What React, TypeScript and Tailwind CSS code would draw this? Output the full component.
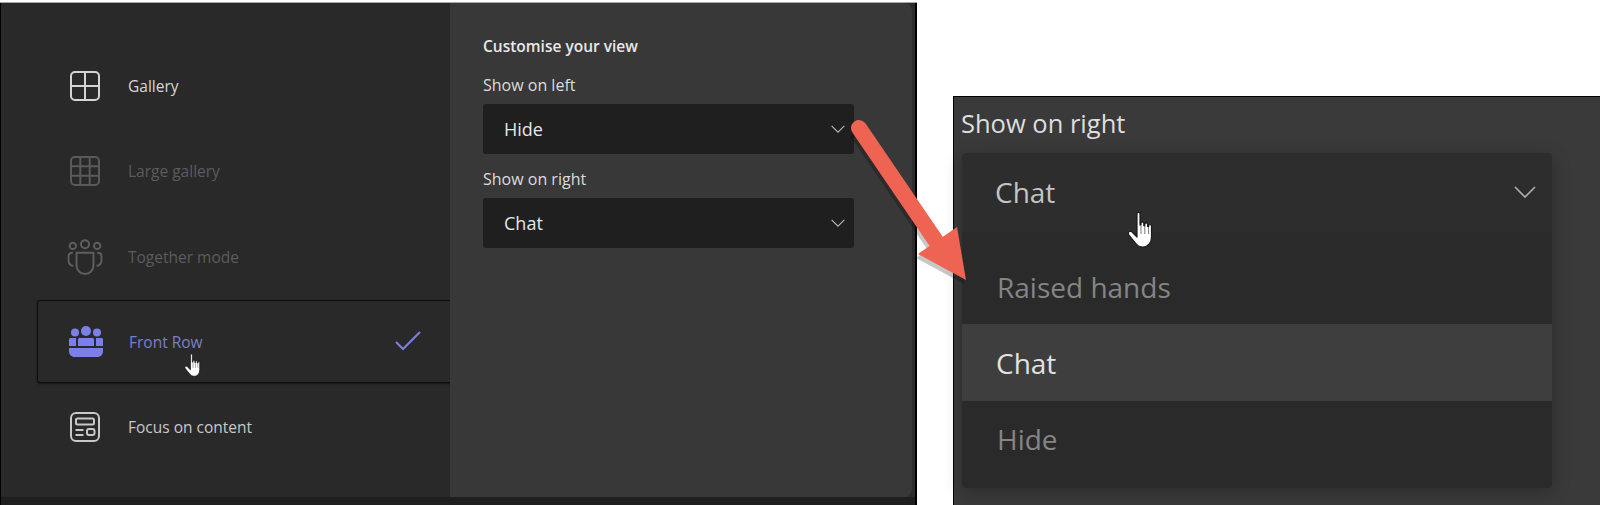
const font = "font-['Open_Sans','Noto_Sans',sans-serif]";

function Chevron({ className }: { className: string }) {
  return (
    <svg className={className} viewBox="0 0 22 12" fill="none" stroke="currentColor" strokeWidth="1.700">
      <path d="M1 1l10 10L21 1" />
    </svg>
  );
}

function GalleryIcon() {
  return (
    <svg className="shrink-0" width="30" height="30" viewBox="0 0 30 30" fill="none" stroke="#d4d4d4" strokeWidth="2">
      <rect x="1" y="1" width="28" height="28" rx="4" />
      <path d="M15 1v28M1 15h28" />
    </svg>
  );
}

function LargeGalleryIcon() {
  return (
    <svg className="shrink-0" width="30" height="30" viewBox="0 0 30 30" fill="none" stroke="#5a5a5a" strokeWidth="2">
      <rect x="1" y="1" width="28" height="28" rx="4" />
      <path d="M10.3 1v28M19.700 1v28M1 10.300h28M1 19.700h28" />
    </svg>
  );
}

function TogetherIcon() {
  return (
    <svg className="shrink-0" width="36" height="36" viewBox="0 0 34 34" fill="none" stroke="#5f5f5f" strokeWidth="1.800">
      <circle cx="17" cy="5" r="3.800" />
      <circle cx="5.500" cy="6.500" r="3" />
      <circle cx="28.500" cy="6.500" r="3" />
      <path d="M9 13h16v12c0 4.500-3.500 8-8 8s-8-3.500-8-8z" />
      <path d="M5.500 13c-2.500 0-4 1-4 3v4c0 3 1.500 5 4.500 5.500" />
      <path d="M28.500 13c2.500 0 4 1 4 3v4c0 3-1.500 5-4.500 5.500" />
    </svg>
  );
}

function FrontRowIcon() {
  return (
    <svg className="shrink-0" width="34" height="31" viewBox="0 0 34 31" fill="#7b80e8">
      <circle cx="17" cy="5" r="5" />
      <circle cx="6" cy="6.500" r="4" />
      <circle cx="28" cy="6.500" r="4" />
      <path d="M10.500 12h13c.8 0 1.500.7 1.500 1.500V20H9v-6.500c0-.8.7-1.500 1.500-1.500z" />
      <path d="M1.500 12H7v8H0v-6.500C0 12.700.7 12 1.500 12z" />
      <path d="M27 12h5.500c.8 0 1.500.7 1.500 1.500V20h-7z" />
      <path d="M0 22h34v3.500c0 3-2.500 5.500-5.500 5.500h-23C2.500 31 0 28.500 0 25.500z" />
    </svg>
  );
}

function FocusIcon() {
  return (
    <svg className="shrink-0" width="30" height="30" viewBox="0 0 30 30" fill="none" stroke="#c8c8c8" strokeWidth="2">
      <rect x="1" y="1" width="28" height="28" rx="5" />
      <rect x="6" y="6.500" width="18" height="6" rx="1.500" />
      <path d="M5.500 18h8M5.500 23h8" />
      <rect x="17" y="17" width="7.500" height="6" rx="2" />
    </svg>
  );
}

function Hand({ className }: { className: string }) {
  return (
    <svg className={className} viewBox="0 0 28 37" fill="#ffffff" stroke="#1a1a1a" strokeWidth="1.200" strokeLinejoin="round">
      <path d="M10 2.500c0-1.600 3-1.600 3 0V14l1 .2V12c0-1.400 2.800-1.400 2.800 0v2.600l1 .2v-1.800c0-1.400 2.800-1.400 2.800 0v2.400l1 .2v-1c0-1.400 2.900-1.400 2.900 0V26c0 5-3 10-8.500 10-4 0-6-1.500-8-4.500L2 24c-1-1.500-.8-3 .5-3.500 1.200-.5 2.500.2 3.500 1.500l4 4z" />
      <path d="M14 15v8M17.800 15v8M21.600 16v7" stroke="#555555" strokeWidth="0.800" fill="none" />
    </svg>
  );
}

function Row({ icon, label, tone }: { icon: React.ReactNode; label: string; tone: string }) {
  return (
    <div className="flex h-[85.5px] items-center pl-[33px]">
      <div className="flex w-[30px] justify-center">{icon}</div>
      <span className={`ml-[28px] pt-[1px] text-[15.500px] ${tone}`}>{label}</span>
    </div>
  );
}

function Select({ value }: { value: string }) {
  return (
    <div className="flex h-[50px] w-[371px] items-center justify-between rounded-[3px] bg-[#1f1f1f] pl-[21px] pr-[9px] text-[18px] text-[#e6e6e6]">
      <span>{value}</span>
      <Chevron className="h-[8px] w-[14px] text-[#b8b8b8]" />
    </div>
  );
}

export default function App() {
  return (
    <div className={`relative flex h-[505px] w-[1600px] overflow-hidden bg-white ${font}`}>
      {/* Left screenshot */}
      <div className="flex h-full w-[917px] flex-col pt-[2px]">
        <div className="h-px bg-[#a8a8a8]" />
        <div className="flex min-h-0 flex-1 border-x border-r-2 border-black bg-[#2c2c2c]">
          <div className="w-[449px] bg-[#292929] pl-[36px] pt-[40px]">
            <Row icon={<GalleryIcon />} label="Gallery" tone="text-[#d6d6d6]" />
            <Row icon={<LargeGalleryIcon />} label="Large gallery" tone="text-[#5c5c5c]" />
            <Row icon={<TogetherIcon />} label="Together mode" tone="text-[#5c5c5c]" />
            <div className="-mr-px mb-[2px] flex h-[83px] items-center rounded-l-[3px] border border-r-0 border-[#0d0d0d] pl-[33px] pr-[30px] shadow-[0_1px_2px_rgba(0,0,0,0.5)]">
              <div className="flex w-[30px] justify-center">
                <FrontRowIcon />
              </div>
              <span className="ml-[28px] flex-1 pt-[3px] text-[15.500px] text-[#7a7fcb]">Front Row</span>
              <svg width="26" height="20" viewBox="0 0 26 20" fill="none" stroke="#7b7fdc" strokeWidth="2.200">
                <path d="M1 11l7 7L25 1" />
              </svg>
            </div>
            <Row icon={<FocusIcon />} label="Focus on content" tone="text-[#c8c8c8]" />
          </div>
          <div className="w-[462px] rounded-r-lg bg-[#383838] pl-[33px] pt-[33px]">
            <h2 className="text-[15.500px] leading-[20px] font-semibold text-[#e8e8e8]">Customise your view</h2>
            <p className="mt-[19px] mb-[9px] text-[16px] leading-[20px] text-[#dcdcdc]">Show on left</p>
            <Select value="Hide" />
            <p className="mt-[15px] mb-[9px] text-[16px] leading-[20px] text-[#dcdcdc]">Show on right</p>
            <Select value="Chat" />
          </div>
        </div>
        <div className="h-[8px] border-x border-r-2 border-black bg-[#1f1f1f]" />
      </div>

      {/* Zoomed dropdown */}
      <div className="ml-[36px] mt-[96px] flex-1 border-l border-t border-black bg-[#3a3a3a] pl-[8px]">
        <p className="-ml-px pt-[10px] text-[25.500px] leading-[32px] text-[#dedede]">Show on right</p>
        <div className="mt-[14px] w-[590px] rounded-[4px] shadow-[0_4px_18px_rgba(0,0,0,0.25)]">
          <div className="flex h-[79px] items-center justify-between rounded-t-[4px] bg-[#2d2d2d] pb-[2px] pl-[33px] pr-[16px] text-[28px] text-[#c4c4c4]">
            <span>Chat</span>
            <Chevron className="h-[12px] w-[22px] text-[#adadad]" />
          </div>
          <div className="rounded-b-[4px] bg-[#2a2a2a] pb-[10px] pt-[15px] text-[28px]">
            <div className="flex h-[77px] items-center pl-[35px] pt-[2px] text-[#858585]">Raised hands</div>
            <div className="flex h-[77px] items-center bg-[#3e3e3e] pl-[34px] text-[#e2e2e2]">Chat</div>
            <div className="flex h-[77px] items-center pb-[2px] pl-[35px] text-[#858585]">Hide</div>
          </div>
        </div>
      </div>

      {/* Annotation arrow */}
      <svg className="absolute left-0 top-0" width="1600" height="505" viewBox="0 0 1600 505" fill="none">
        <path d="M859 128L940 247" stroke="#000000" strokeOpacity="0.22" strokeWidth="16" transform="translate(-2 4)" />
        <path d="M918 254L957 227L966 280z" fill="#000000" fillOpacity="0.22" transform="translate(-2 4)" />
        <path d="M859 128L942 250" stroke="#ee6352" strokeWidth="16" strokeLinecap="round" />
        <path d="M918 254L957 227L966 280z" fill="#ee6352" />
      </svg>

      <Hand className="absolute left-[184px] top-[353px] h-[24px] w-[18px]" />
      <Hand className="absolute left-[1127px] top-[211px] h-[37px] w-[28px]" />
    </div>
  );
}
